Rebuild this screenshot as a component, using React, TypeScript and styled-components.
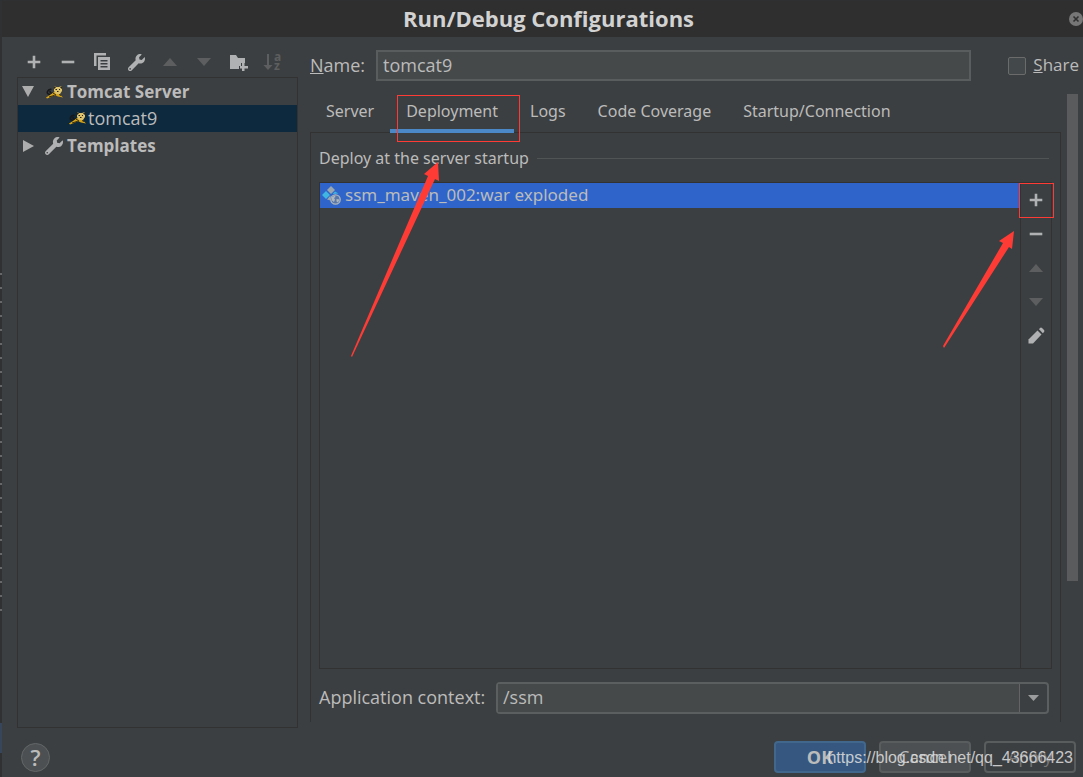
import React from "react";
import styled, { createGlobalStyle, css } from "styled-components";
import { FaWrench } from "react-icons/fa";

const color = {
  base: "#3c3f41",
  title: "#2f2f2f",
  text: "#bbbbbb",
  icon: "#afb1b3",
  dim: "#5d5e5f",
  line: "#323232",
  field: "#45494a",
  fieldLine: "#646464",
  red: "#ff3b36",
};

const wideFont = `"Noto Sans", "Open Sans", sans-serif`;

const GlobalStyle = createGlobalStyle`
  * { box-sizing: border-box; }
  body {
    margin: 0;
    background: #2f3031;
    color: ${color.text};
    font-family: "Open Sans", "Noto Sans", sans-serif;
    font-size: 18px;
    line-height: 26px;
  }
  button, input { font: inherit; color: inherit; }
  button { padding: 0; border: 0; background: none; }
  h1, h2, ul { margin: 0; padding: 0; font: inherit; list-style: none; }
`;

const Page = styled.div`
  display: flex;
  min-height: 100vh;
  padding-top: 1px;
  overflow: hidden;
`;

const EditorEdge = styled.div`
  flex: none;
  width: 2px;
  background: linear-gradient(#303132 0 722px, #37465a 722px 752px, #303132 752px);

  &::before {
    content: "";
    display: block;
    height: 350px;
    margin-top: 270px;
    background: repeating-linear-gradient(#303132 0 2px, #66696b 2px 4px, #303132 4px 14px);
  }
`;

const Dialog = styled.main`
  flex: 1;
  min-width: 0;
  display: flex;
  flex-direction: column;
  background: ${color.base};
`;

const TitleBar = styled.header`
  display: grid;
  grid-template-columns: 1fr auto 1fr;
  align-items: center;
  height: 36px;
  padding-left: 12px;
  background: ${color.title};
`;

const Title = styled.h1`
  grid-column: 2;
  padding-bottom: 2px;
  font-size: 22px;
  font-weight: 700;
  color: #d2d2d2;
`;

const CloseButton = styled.button`
  justify-self: end;
  height: 14px;
  line-height: 0;
`;

const Content = styled.div`
  flex: 1;
  display: grid;
  grid-template-columns: 281px minmax(0, 1fr);
  gap: 12px;
  padding-left: 15px;
`;

const Sidebar = styled.section`
  display: flex;
  flex-direction: column;
`;

const Toolbar = styled.div`
  display: flex;
  height: 40px;
  padding-top: 9px;
`;

const ToolButton = styled.button<{ $tall?: boolean }>`
  display: grid;
  place-items: center;
  width: 34px;
  height: ${(p) => (p.$tall ? 34 : 32)}px;
`;

const Tree = styled.ul`
  flex: 1;
  border: 1px solid ${color.line};
`;

const TreeRow = styled.li<{ $bold?: boolean; $selected?: boolean; $depth?: number }>`
  display: flex;
  align-items: center;
  gap: ${(p) => (p.$depth ? 2 : 4)}px;
  height: 27px;
  padding: 0 0 ${(p) => (p.$depth ? "2px 50px" : "0 4px")};
  font-size: ${(p) => (p.$bold ? 17 : 18)}px;
  font-weight: ${(p) => (p.$bold ? 700 : 400)};
  background: ${(p) => (p.$selected ? "#0d293e" : "transparent")};
`;

const Disclosure = styled.span`
  display: grid;
  place-items: center;
  width: 12px;
  margin-right: 7px;
`;

const Settings = styled.section`
  display: flex;
  flex-direction: column;
  padding-top: 13px;
`;

const NameRow = styled.div`
  display: flex;
  align-items: center;
  height: 31px;
  padding-right: 4px;
`;

const NameLabel = styled.label`
  flex: none;
  width: 66px;
  padding-bottom: 2px;
`;

const NameInput = styled.input`
  flex: 1;
  min-width: 0;
  height: 31px;
  margin-right: 37px;
  padding: 0 5px 2px;
  border: 2px solid #5a5d5e;
  background: ${color.field};
  outline: 0;
`;

const ShareBox = styled.input`
  appearance: none;
  width: 18px;
  height: 18px;
  margin: 0 7px 0 0;
  border: 1px solid #6b6b6b;
  border-radius: 2px;
  background: #43494a;
`;

const ShareLabel = styled.label`
  padding-bottom: 2px;
  font-size: 17px;
`;

const ScrollArea = styled.div`
  flex: 1;
  display: flex;
  gap: 6px;
  padding: 9px 5px 6px 0;
`;

const ScrollThumb = styled.div`
  flex: none;
  width: 11px;
  height: 77%;
  margin-top: 4px;
  background: #5a5b5c;
`;

const TabbedPane = styled.div`
  flex: 1;
  min-width: 0;
  display: flex;
  flex-direction: column;
`;

const TabList = styled.div`
  display: flex;
  height: 42px;
`;

const Tab = styled.button<{ $active?: boolean }>`
  position: relative;
  padding: 0 16px;
  font-family: ${wideFont};
  font-size: 16px;

  ${(p) =>
    p.$active &&
    css`
      z-index: 1;
      &::before {
        content: "";
        position: absolute;
        inset: auto 0 -1px;
        height: 4px;
        background: #4a88c7;
      }
    `}
`;

const Highlight = styled.span<{ $inset: string }>`
  position: absolute;
  inset: ${(p) => p.$inset};
  border: 1px solid ${color.red};
`;

const Panel = styled.div`
  flex: 1;
  display: flex;
  flex-direction: column;
  padding: 12px 8px 8px;
  border: 1px solid ${color.line};
  border-bottom: 0;
`;

const GroupTitle = styled.h2`
  display: flex;
  align-items: center;
  gap: 8px;
  height: 26px;
  margin: 0 3px 11px 0;
  font-family: ${wideFont};
  font-size: 16px;

  &::after {
    content: "";
    flex: 1;
    height: 1px;
    background: #515455;
  }
`;

const ArtifactBox = styled.div`
  position: relative;
  flex: 1;
  display: flex;
  border: 1px solid ${color.line};
`;

const ArtifactList = styled.ul`
  flex: 1;
`;

const Artifact = styled.li`
  display: flex;
  align-items: center;
  gap: 4px;
  height: 25px;
  padding: 0 0 1px 2px;
  background: #2f65ca;
  font-family: ${wideFont};
  font-size: 17px;
  line-height: 24px;
`;

const SideTools = styled.div`
  flex: none;
  width: 31px;
  border-left: 1px solid ${color.line};

  ${ToolButton} {
    position: relative;
    width: 30px;
  }
`;

const Arrow = styled.svg<{ $left?: string; $right?: string; $top: number }>`
  position: absolute;
  z-index: 2;
  top: ${(p) => p.$top}px;
  left: ${(p) => p.$left ?? "auto"};
  right: ${(p) => p.$right ?? "auto"};
  fill: ${color.red};
  pointer-events: none;
`;

const ContextRow = styled.div`
  display: flex;
  align-items: center;
  height: 32px;
  margin: 13px 3px 0 0;
`;

const ContextLabel = styled.label`
  flex: none;
  width: 177px;
  padding-bottom: 2px;
`;

const Combo = styled.div`
  flex: 1;
  display: flex;
  height: 32px;
  border: 2px solid #5c5f60;
  border-radius: 4px;
`;

const ComboInput = styled.input`
  flex: 1;
  min-width: 0;
  padding: 0 5px 2px;
  border: 0;
  background: ${color.field};
  outline: 0;
`;

const ComboButton = styled.button`
  display: grid;
  place-items: center;
  width: 28px;
  border-left: 1px solid ${color.fieldLine};
`;

const Footer = styled.footer`
  position: relative;
  display: flex;
  align-items: center;
  gap: 13px;
  height: 49px;
  padding: 9px 7px 0 19px;
`;

const HelpButton = styled.button`
  width: 29px;
  height: 29px;
  margin-right: auto;
  border: 1px solid #646768;
  border-radius: 50%;
  background: #4c5052;
  font-size: 22px;
  font-weight: 600;
  line-height: 26px;
`;

const ActionButton = styled.button<{ $kind?: "primary" | "disabled" }>`
  width: 92px;
  height: 32px;
  border: 2px solid ${(p) => (p.$kind === "primary" ? "#41688c" : "#5a5d5e")};
  border-radius: 4px;
  background: ${(p) =>
    p.$kind === "primary" ? "#365880" : p.$kind === "disabled" ? color.base : "#4c5052"};
  color: ${(p) => (p.$kind === "disabled" ? "#777777" : color.text)};
  font-size: ${(p) => (p.$kind === "primary" ? 18 : 17)}px;
  font-weight: ${(p) => (p.$kind === "primary" ? 700 : 400)};
  line-height: 26px;
`;

const Watermark = styled.span`
  position: absolute;
  right: 10px;
  bottom: 6px;
  color: rgba(225, 225, 225, 0.85);
  font-family: "Liberation Sans", Arial, sans-serif;
  font-size: 16px;
  pointer-events: none;
`;

const PlusIcon = () => (
  <svg width="14" height="14" viewBox="0 0 14 14" fill={color.icon}>
    <path d="M5.700 .7h2.600v5h5v2.600h-5v5H5.700v-5h-5V5.700h5z" />
  </svg>
);

const MinusIcon = () => (
  <svg width="14" height="14" viewBox="0 0 14 14" fill={color.icon}>
    <path d="M.7 5.700h12.600v2.600H.7z" />
  </svg>
);

const CopyIcon = () => (
  <svg width="18" height="18" viewBox="0 0 18 18" fill={color.icon}>
    <path d="M1 0h12v2.500H3.500V13H1z" />
    <path fillRule="evenodd" d="M5 4h12v13H5zM7.500 7v1.500h7V7zm0 3v1.500h7V10zm0 3v1.500h7V13z" />
  </svg>
);

const Triangle = ({ dir, fill = color.dim }: { dir: "up" | "down"; fill?: string }) => (
  <svg width="16" height="8" viewBox="0 0 16 8" fill={fill}>
    <path d={dir === "up" ? "M8 0l7 8H1z" : "M1 0h14L8 8z"} />
  </svg>
);

const FolderPlusIcon = () => (
  <svg width="20" height="18" viewBox="0 0 20 18" fill={color.icon}>
    <path d="M2 2h6l2 3h7v5h-4v3h-2v3H2z" />
    <path d="M14 10h2.500v3H20v2.500h-3.500V18H14v-2.500h-2V13h2z" />
  </svg>
);

const SortGlyph = styled.svg`
  overflow: visible;
  font-family: "Open Sans", sans-serif;
  font-size: 12px;
  font-weight: 700;
  line-height: 12px;
`;

const SortIcon = () => (
  <SortGlyph width="18" height="18" viewBox="0 0 18 18" fill={color.dim}>
    <path d="M4 1h2v11h3.500L5 17 .5 12H4z" />
    <text x="11" y="8">a</text>
    <text x="11" y="17">z</text>
  </SortGlyph>
);

const PencilIcon = () => (
  <svg width="18" height="18" viewBox="0 0 18 18" fill={color.icon}>
    <path d="M10.500 3.500l4 4-8.500 9H1.500V12.500z" />
    <path d="M12 2.200l1-1.200q1-.9 2 0l2 2q.9 1 0 2l-1.200 1.200z" />
  </svg>
);

const CatIcon = () => (
  <svg width="18" height="14" viewBox="0 0 18 14">
    <path d="M5 9.500Q1.500 9 2.500 6.500T6.500 4.500M5 6q0 3 4 2M7 11l-2-1" fill="none" stroke="#16181a" strokeWidth="1.600" />
    <path d="M1 12.500L5 10l4-3 5 0 1 2.500 3 3-5-1-3-1.500-4 2-4 1.500z" fill="#d6a419" />
    <path d="M9 1l2 1h3l3-1v5l-2 3h-4L9 6z" fill="#dcc26a" />
    <path d="M9 1l2 1.500L9 4zM17 1l-2 1.500L17 4zM10.500 4h1.500v1h-1.500zM14 4h1v1h-1zM12 6h1.500v1H12z" fill="#2a2518" />
    <path d="M8 8l3 2M14 9.500l2 1M4 12l5-1.500" stroke="#3a2c08" fill="none" />
  </svg>
);

const ArtifactIcon = () => (
  <svg width="19" height="19" viewBox="0 0 19 19">
    <path d="M9 0l4 4-4 4-4-4z" fill="#9aa7b0" />
    <path d="M4 5l4 4-4 4-4-4zM13 5.500l3.500 2-6 .5z" fill="#40b6e0" />
    <path d="M8.500 9.500v5L5 13.500z" fill="#9aa7b0" />
    <circle cx="13.500" cy="13.500" r="4.700" fill="#5877ab" stroke="#aeb7bd" strokeWidth="1.300" />
    <path d="M10 11l3-1.500.5 1.500-1.500 1 1 1.500-1 2.500-2-1.500zM14.500 13l3 .5-1.500 3-1.500-1z" fill="#aeb7bd" />
  </svg>
);

const CloseIcon = () => (
  <svg width="14" height="14" viewBox="0 0 14 14">
    <circle cx="7" cy="7" r="7" fill="#777777" />
    <path d="M4.500 4.500l5 5m0-5l-5 5" stroke="#303030" strokeWidth="1.600" />
  </svg>
);

export default function App() {
  return (
    <>
      <GlobalStyle />
      <Page>
        <EditorEdge />
        <Dialog>
          <TitleBar>
            <Title>Run/Debug Configurations</Title>
            <CloseButton aria-label="Close"><CloseIcon /></CloseButton>
          </TitleBar>

          <Content>
            <Sidebar>
              <Toolbar>
                <ToolButton aria-label="Add"><PlusIcon /></ToolButton>
                <ToolButton aria-label="Remove"><MinusIcon /></ToolButton>
                <ToolButton aria-label="Copy"><CopyIcon /></ToolButton>
                <ToolButton aria-label="Edit templates"><FaWrench size={17} color={color.icon} /></ToolButton>
                <ToolButton aria-label="Move up"><Triangle dir="up" /></ToolButton>
                <ToolButton aria-label="Move down"><Triangle dir="down" /></ToolButton>
                <ToolButton aria-label="New folder"><FolderPlusIcon /></ToolButton>
                <ToolButton aria-label="Sort"><SortIcon /></ToolButton>
              </Toolbar>
              <Tree>
                <TreeRow $bold>
                  <Disclosure>
                    <svg width="12" height="11" viewBox="0 0 12 11" fill="#adadad"><path d="M0 0h12L6 11z" /></svg>
                  </Disclosure>
                  <CatIcon />
                  Tomcat Server
                </TreeRow>
                <TreeRow $selected $depth={1}>
                  <CatIcon />
                  tomcat9
                </TreeRow>
                <TreeRow $bold>
                  <Disclosure>
                    <svg width="11" height="12" viewBox="0 0 11 12" fill="#adadad"><path d="M0 0l11 6-11 6z" /></svg>
                  </Disclosure>
                  <FaWrench size={18} color={color.icon} />
                  Templates
                </TreeRow>
              </Tree>
            </Sidebar>

            <Settings>
              <NameRow>
                <NameLabel htmlFor="name"><u>N</u>ame:</NameLabel>
                <NameInput id="name" defaultValue="tomcat9" />
                <ShareBox id="share" type="checkbox" />
                <ShareLabel htmlFor="share"><u>S</u>hare</ShareLabel>
              </NameRow>

              <ScrollArea>
                <TabbedPane>
                  <TabList role="tablist">
                    <Tab role="tab">Server</Tab>
                    <Tab role="tab" aria-selected $active>
                      Deployment
                      <Highlight $inset="5px -6px -10px 7px" />
                    </Tab>
                    <Tab role="tab">Logs</Tab>
                    <Tab role="tab">Code Coverage</Tab>
                    <Tab role="tab">Startup/Connection</Tab>
                  </TabList>

                  <Panel>
                    <GroupTitle>Deploy at the server startup</GroupTitle>
                    <ArtifactBox>
                      <ArtifactList>
                        <Artifact><ArtifactIcon />ssm_maven_002:war exploded</Artifact>
                      </ArtifactList>
                      <SideTools>
                        <ToolButton $tall aria-label="Add artifact">
                          <PlusIcon />
                          <Highlight $inset="0 -3px -1px -2px" />
                        </ToolButton>
                        <ToolButton $tall aria-label="Remove artifact"><MinusIcon /></ToolButton>
                        <ToolButton $tall aria-label="Move artifact up"><Triangle dir="up" /></ToolButton>
                        <ToolButton $tall aria-label="Move artifact down"><Triangle dir="down" /></ToolButton>
                        <ToolButton $tall aria-label="Edit artifact"><PencilIcon /></ToolButton>
                      </SideTools>
                      <Arrow $left="31px" $top={-21} width="90" height="196" viewBox="0 0 90 196">
                        <path d="M0 194L77 14l-4-2L87 0l1 19-4-2L1 195z" />
                      </Arrow>
                      <Arrow $right="36px" $top={48} width="72" height="118" viewBox="0 0 72 118">
                        <path d="M0 115L60 12l-4-2L71 0l-2 18-3-2L1 117z" />
                      </Arrow>
                    </ArtifactBox>
                    <ContextRow>
                      <ContextLabel htmlFor="context">Application context:</ContextLabel>
                      <Combo>
                        <ComboInput id="context" defaultValue="/ssm" />
                        <ComboButton aria-label="Show contexts">
                          <svg width="11" height="6" viewBox="0 0 11 6" fill="#9a9c9d"><path d="M0 0h11L5.500 6z" /></svg>
                        </ComboButton>
                      </Combo>
                    </ContextRow>
                  </Panel>
                </TabbedPane>
                <ScrollThumb />
              </ScrollArea>
            </Settings>
          </Content>

          <Footer>
            <HelpButton aria-label="Help">?</HelpButton>
            <ActionButton $kind="primary">OK</ActionButton>
            <ActionButton>Cancel</ActionButton>
            <ActionButton $kind="disabled" disabled>Apply</ActionButton>
            <Watermark>https://blog.csdn.net/qq_43666423</Watermark>
          </Footer>
        </Dialog>
      </Page>
    </>
  );
}
